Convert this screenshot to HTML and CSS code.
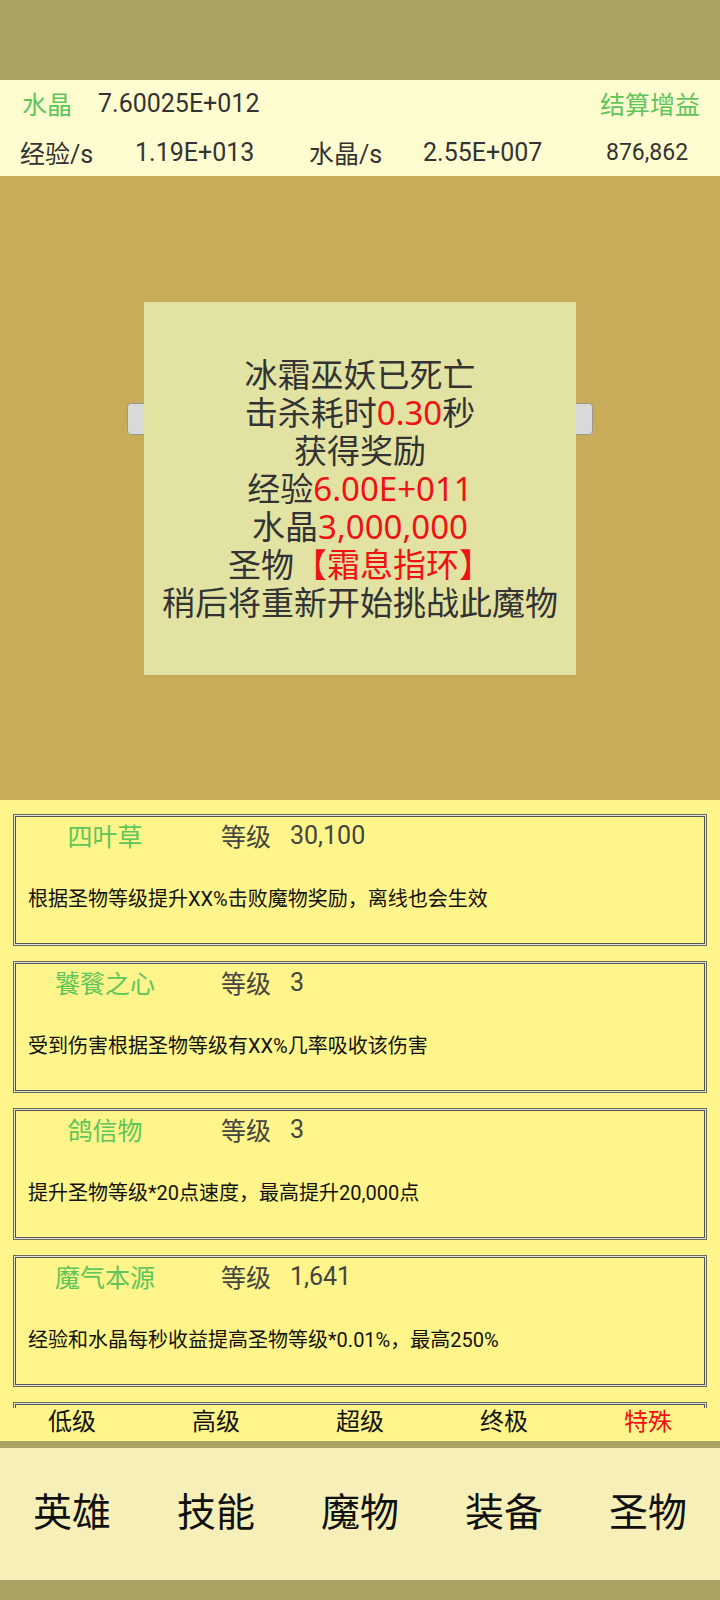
FILE: index.html
```html
<!DOCTYPE html>
<html lang="zh">
<head>
  <meta charset="UTF-8">
  <title>圣物</title>
  <link rel="stylesheet" href="styles.css">
</head>
<body>
  <div class="top-band"></div>

  <!-- 资源栏 -->
  <header class="stats">
    <div class="stats-row first">
      <span class="green">水晶</span>
      <span class="crystal">7.60025E+012</span>
      <span class="green buff">结算增益</span>
    </div>
    <div class="stats-row second">
      <span>经验/s</span>
      <span>1.19E+013</span>
      <span>水晶/s</span>
      <span>2.55E+007</span>
      <span class="small">876,862</span>
    </div>
  </header>

  <!-- 战斗区域 -->
  <section class="battle">
    <div class="battle-buttons">
      <button class="btn"></button>
      <button class="btn"></button>
    </div>
    <div class="popup">
      <p>冰霜巫妖已死亡</p>
      <p>击杀耗时<span class="red">0.30</span>秒</p>
      <p>获得奖励</p>
      <p>经验<span class="red">6.00E+011</span></p>
      <p>水晶<span class="red">3,000,000</span></p>
      <p>圣物<span class="red">【霜息指环】</span></p>
      <p>稍后将重新开始挑战此魔物</p>
    </div>
  </section>

  <!-- 圣物列表 -->
  <section class="relic-list">
    <div class="relic">
      <div class="relic-head"><span class="relic-name">四叶草</span><span class="lv">等级</span><span class="lv-num">30,100</span></div>
      <p class="relic-desc">根据圣物等级提升XX%击败魔物奖励，离线也会生效</p>
    </div>
    <div class="relic">
      <div class="relic-head"><span class="relic-name">饕餮之心</span><span class="lv">等级</span><span class="lv-num">3</span></div>
      <p class="relic-desc">受到伤害根据圣物等级有XX%几率吸收该伤害</p>
    </div>
    <div class="relic">
      <div class="relic-head"><span class="relic-name">鸽信物</span><span class="lv">等级</span><span class="lv-num">3</span></div>
      <p class="relic-desc">提升圣物等级*20点速度，最高提升20,000点</p>
    </div>
    <div class="relic">
      <div class="relic-head"><span class="relic-name">魔气本源</span><span class="lv">等级</span><span class="lv-num">1,641</span></div>
      <p class="relic-desc">经验和水晶每秒收益提高圣物等级*0.01%，最高250%</p>
    </div>
    <div class="relic"></div>
  </section>

  <nav class="tabs">
    <span>低级</span>
    <span>高级</span>
    <span>超级</span>
    <span>终极</span>
    <span class="red">特殊</span>
  </nav>

  <div class="line"></div>

  <nav class="main-nav">
    <span>英雄</span>
    <span>技能</span>
    <span>魔物</span>
    <span>装备</span>
    <span>圣物</span>
  </nav>

  <div class="bottom-band"></div>
</body>
</html>
```

FILE: styles.css
```css
/* 기본 리셋 */
* { margin: 0; padding: 0; box-sizing: border-box; }
body {
  font-family: Roboto, "Noto Sans CJK SC", sans-serif;
  background-color: #a8a363;
  color: #333;
  width: 720px;
}
.green { color: #5dc55a; }
.red { color: #f01212; }

.top-band { height: 80px; background-color: #a8a363; }
.bottom-band { height: 21px; background-color: #a8a363; }

/* 资源栏 */
.stats {
  height: 96px;
  background-color: #fffdd0;
  font-size: 25px;
}
.stats-row {
  height: 48px;
  display: flex;
  align-items: center;
}
.stats-row.first { padding: 0 20px 2px 22px; }
.stats-row.first .crystal { margin-left: 26px; }
.stats-row.first .buff { margin-left: auto; }
.stats-row.second {
  display: grid;
  grid-template-columns: 115px 174px 114px 183px auto;
  padding-left: 20px;
}
.stats-row .small { font-size: 23px; }

/* 战斗区域 */
.battle {
  position: relative;
  height: 624px;
  background-color: #c8ac5a;
  padding-top: 227px;
}
.battle-buttons {
  display: flex;
  justify-content: space-between;
  margin: 0 127px;
}
.btn {
  width: 200px;
  height: 32px;
  background-color: #d9d9d9;
  border: 1px solid #9a9a8a;
  border-radius: 4px;
}
.popup {
  position: absolute;
  left: 144px;
  top: 126px;
  width: 432px;
  height: 373px;
  background-color: #e2e3a3;
  display: flex;
  flex-direction: column;
  justify-content: center;
  align-items: center;
  font-family: "Noto Sans", "Noto Sans CJK SC", sans-serif;
  font-size: 33px;
  line-height: 38px;
  color: #333;
}

/* 圣物列表 */
.relic-list {
  height: 608px;
  overflow: hidden;
  background-color: #fff58a;
  padding: 14px 13px 0;
}
.relic {
  height: 132px;
  margin-bottom: 15px;
  border: 1px solid #6a6a5c;
  box-shadow: inset 0 0 0 1px #e2e2d2, inset 0 0 0 2px #555;
  padding: 0 13px 0 2px;
}
.relic-head {
  display: flex;
  align-items: center;
  height: 40px;
  font-size: 25px;
  color: #444;
}
.relic-name {
  width: 178px;
  text-align: center;
  color: #5dc55a;
}
.lv { margin-left: 27px; }
.lv-num { margin-left: 19px; }
.relic-desc {
  margin-top: 24px;
  padding-left: 12px;
  line-height: 40px;
  font-size: 20px;
  color: #111;
}

.tabs {
  height: 33px;
  background-color: #fff58a;
  display: grid;
  grid-template-columns: repeat(5, 1fr);
  text-align: center;
  font-size: 24px;
  line-height: 28px;
  color: #111;
}
.tabs .red { color: #f01212; }

.line { height: 7px; background-color: #a8a363; }

.main-nav {
  height: 132px;
  background-color: #f6f0b8;
  display: grid;
  grid-template-columns: repeat(5, 1fr);
  align-items: center;
  text-align: center;
  font-size: 39px;
  padding-bottom: 10px;
  color: #111;
}
```
